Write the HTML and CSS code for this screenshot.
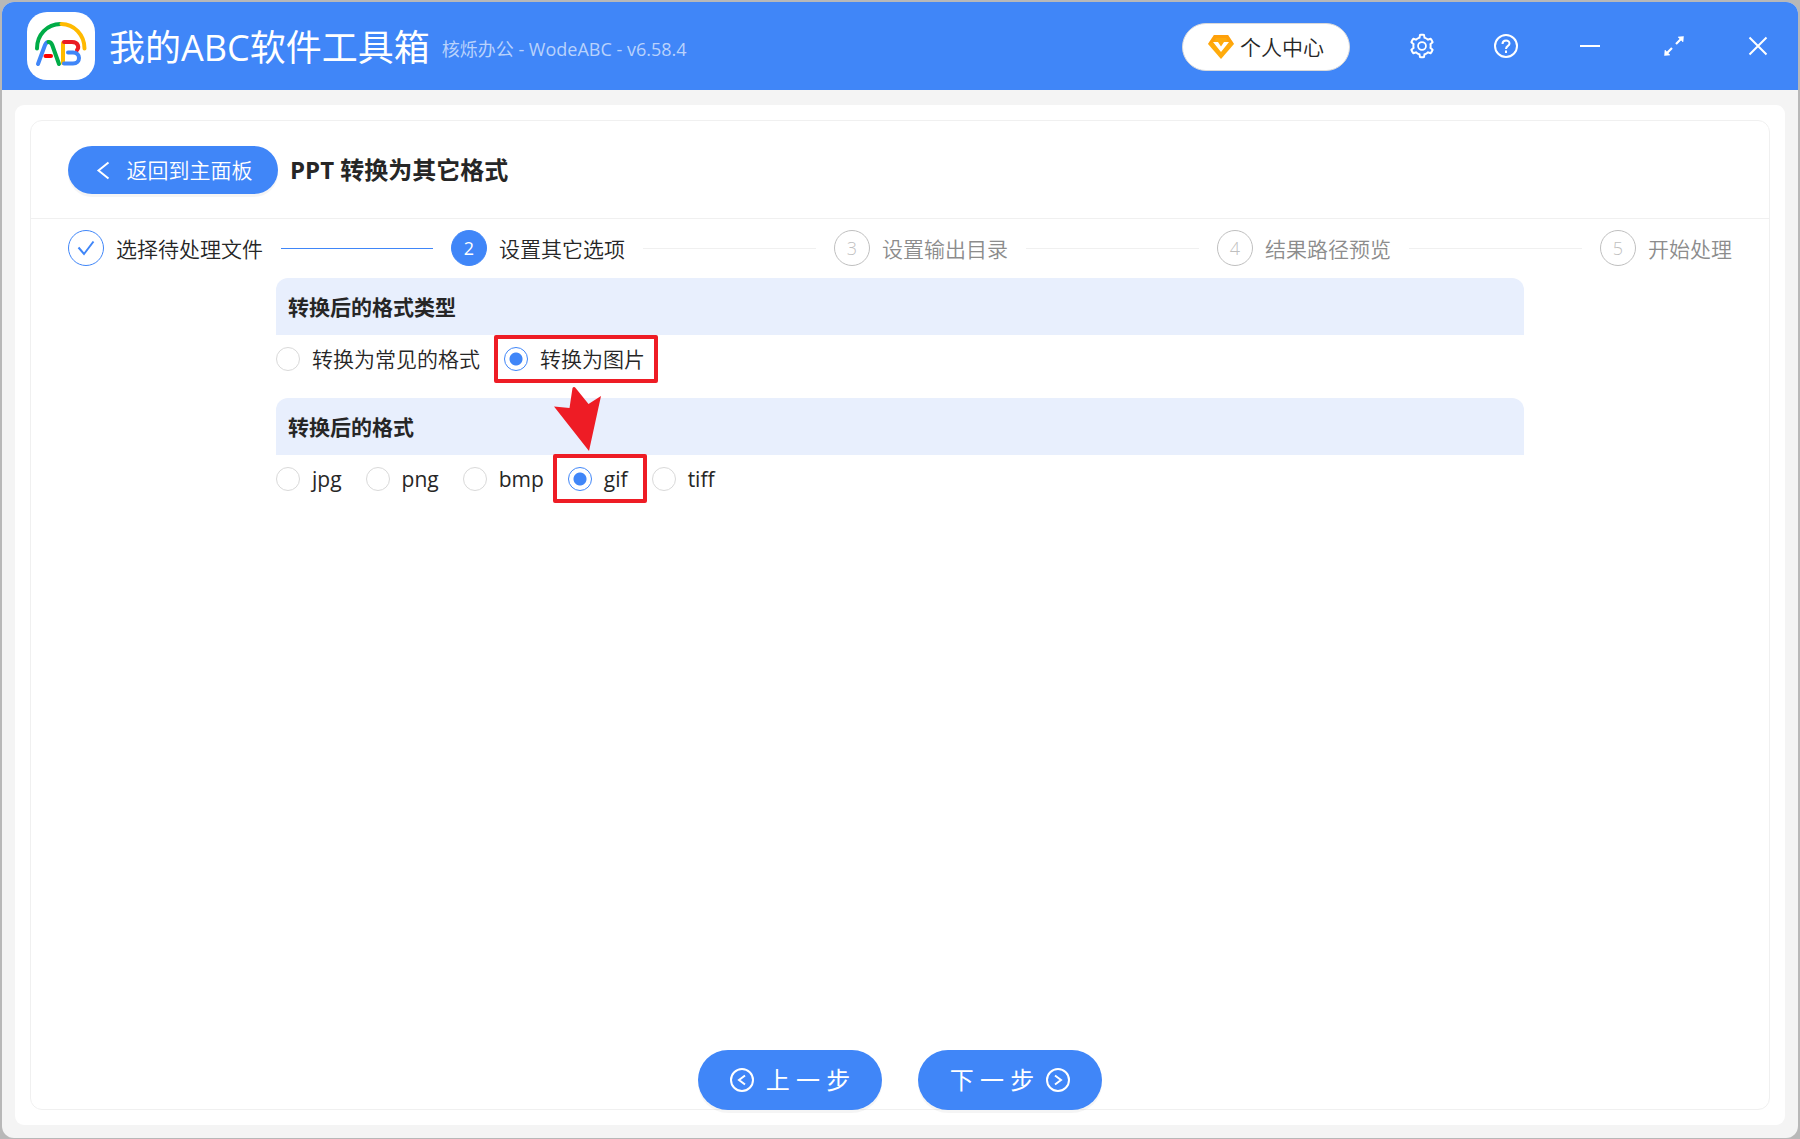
FILE: index.html
```html
<!DOCTYPE html>
<html lang="zh-CN">
<head>
<meta charset="utf-8">
<meta name="viewport" content="width=device-width, initial-scale=1">
<title>我的ABC软件工具箱</title>
<link rel="stylesheet" href="styles.css">
</head>
<body>
<div class="window">
  <header class="titlebar">
    <svg class="logo" viewBox="0 0 68 68" fill="none" stroke-width="4" stroke-linecap="round" aria-hidden="true">
      <path d="M10 36.500C10 23 20 12 33.500 12" stroke="#00ac47"/>
      <path d="M57.500 36.500C57.500 23 47 12 34.500 12" stroke="#ffba00"/>
      <path d="M11 52L18 33C18.800 31 20 30 21.500 30" stroke="#4086f8"/>
      <path d="M21.500 30C23.500 30 24.500 31 25.200 33L32 52" stroke="#00ac47"/>
      <path d="M18.500 44H24" stroke="#f00"/>
      <path d="M36 31V51" stroke="#ffba00"/>
      <path d="M37 30H45C52 30 52 36 50 38" stroke="#ea1c24"/>
      <path d="M41 40.500H46C54 40.500 54 51.500 46 51.500H37" stroke="#4086f8"/>
    </svg>
    <h1 class="app-name">我的ABC软件工具箱</h1>
    <span class="app-version">核烁办公 - WodeABC - v6.58.4</span>
    <div class="actions">
      <button class="account" type="button">
        <svg class="gem" viewBox="0 0 26 24" aria-hidden="true">
          <path d="M6 0H20L26 9L13 24L0 9Z" fill="#ffab0c"/>
          <path d="M6 0H20L26 9L20 7L18 3H8L6 7L0 9Z" fill="#ff9a0a" opacity=".6"/>
          <path d="M5 7H10L13 11.500L16 7H21L13 17Z" fill="#fff"/>
        </svg>
        个人中心
      </button>
      <button class="tool" type="button" aria-label="设置">
        <svg viewBox="0 0 1024 1024" fill="currentColor"><path fill-rule="evenodd" d="M924.8 625.7l-65.500-56c3.100-19 4.700-38.400 4.700-57.800s-1.600-38.800-4.700-57.800l65.500-56a32.030 32.030 0 0 0 9.300-35.200l-.9-2.600a442.500 442.500 0 0 0-79.700-137.900l-1.800-2.100a32.120 32.120 0 0 0-35.100-9.500l-81.300 28.900c-30-24.600-63.500-44-99.700-57.600l-15.700-85a32.050 32.050 0 0 0-25.800-25.700l-2.700-.5c-52.100-9.400-106.900-9.400-159 0l-2.700.5a32.050 32.050 0 0 0-25.800 25.700l-15.800 85.400a351.860 351.860 0 0 0-99 57.400l-81.900-29.100a32 32 0 0 0-35.100 9.500l-1.800 2.100a446.020 446.020 0 0 0-79.700 137.900l-.9 2.600c-4.500 12.500-.8 26.500 9.300 35.200l66.300 56.600c-3.100 18.800-4.600 38-4.600 57.100 0 19.200 1.500 38.400 4.600 57.100L99 625.500a32.030 32.030 0 0 0-9.300 35.200l.9 2.600c18.100 50.400 44.900 96.900 79.700 137.900l1.800 2.100a32.120 32.120 0 0 0 35.100 9.500l81.900-29.100c29.800 24.500 63.100 43.900 99 57.400l15.800 85.400a32.050 32.050 0 0 0 25.800 25.700l2.700.5a449.400 449.400 0 0 0 159 0l2.700-.5a32.050 32.050 0 0 0 25.800-25.700l15.700-85a350 350 0 0 0 99.700-57.600l81.300 28.900a32 32 0 0 0 35.100-9.500l1.800-2.100c34.800-41.100 61.600-87.500 79.700-137.900l.9-2.600c4.500-12.300.8-26.300-9.300-35zM788.300 465.900c2.500 15.100 3.800 30.600 3.800 46.100s-1.300 31-3.800 46.100l-6.600 40.100 74.700 63.900a370.030 370.030 0 0 1-42.600 73.600L721 702.800l-31.400 25.800c-23.900 19.600-50.500 35-79.300 45.800l-38.100 14.300-17.900 97a377.500 377.500 0 0 1-85 0l-17.900-97.200-37.800-14.500c-28.500-10.800-55-26.200-78.700-45.700l-31.400-25.900-93.400 33.200c-17-22.900-31.200-47.600-42.600-73.600l75.500-64.500-6.500-40c-2.400-14.900-3.700-30.300-3.700-45.500 0-15.300 1.200-30.600 3.700-45.500l6.500-40-75.500-64.500c11.300-26.100 25.600-50.700 42.600-73.600l93.400 33.200 31.400-25.900c23.700-19.500 50.200-34.900 78.700-45.700l37.900-14.300 17.900-97.200c28.100-3.200 56.800-3.200 85 0l17.900 97 38.100 14.300c28.700 10.800 55.400 26.200 79.300 45.800l31.400 25.800 92.800-32.900c17 22.900 31.200 47.600 42.600 73.600L781.800 426l6.500 39.900z"/><circle cx="512" cy="512" r="144" fill="none" stroke="currentColor" stroke-width="64"/></svg>
      </button>
      <button class="tool" type="button" aria-label="帮助">
        <svg viewBox="0 0 28 28" fill="none" stroke="currentColor" stroke-width="2"><circle cx="14" cy="14" r="11"/><path d="M10.500 12C10.500 7.500 17.500 7.500 17.500 11.500C17.500 14 14 13.800 14 17"/><path d="M14 18.500V21"/></svg>
      </button>
      <button class="tool" type="button" aria-label="最小化">
        <svg viewBox="0 0 28 28" fill="none" stroke="currentColor" stroke-width="2"><path d="M4 14H24"/></svg>
      </button>
      <button class="tool" type="button" aria-label="最大化">
        <svg viewBox="0 0 28 28" fill="currentColor" stroke="currentColor"><path d="M16 12L21 7M12 16L7 21" stroke-width="2.200"/><path d="M18 5L23.500 4.500L23 10ZM10 23L4.500 23.500L5 18Z" stroke-width=".5"/></svg>
      </button>
      <button class="tool" type="button" aria-label="关闭">
        <svg viewBox="0 0 28 28" fill="none" stroke="currentColor" stroke-width="2"><path d="M5.500 5.500L22.500 22.500M22.500 5.500L5.500 22.500"/></svg>
      </button>
    </div>
  </header>

  <main class="panel">
    <div class="card">
      <div class="card-head">
        <button class="back" type="button">
          <svg class="chevron" viewBox="0 0 21 21" fill="none" stroke="currentColor" stroke-width="2" aria-hidden="true"><path d="M14.500 2.500L4.500 10.500L14.500 18.500"/></svg>
          返回到主面板
        </button>
        <h2 class="page-title">PPT 转换为其它格式</h2>
      </div>

      <ol class="steps">
        <li class="step done">
          <span class="mark"><svg class="check" viewBox="0 0 18 18" fill="none" stroke="currentColor" stroke-width="2" aria-label="完成"><path d="M1.500 8.500L7 15L16.500 2.500"/></svg></span>
          <span class="step-name">选择待处理文件</span>
        </li>
        <li class="step current" aria-current="step"><span class="mark">2</span><span class="step-name">设置其它选项</span></li>
        <li class="step"><span class="mark">3</span><span class="step-name">设置输出目录</span></li>
        <li class="step"><span class="mark">4</span><span class="step-name">结果路径预览</span></li>
        <li class="step"><span class="mark">5</span><span class="step-name">开始处理</span></li>
      </ol>

      <form class="options">
        <h3 class="band" id="kind-title">转换后的格式类型</h3>
        <div class="choices" role="radiogroup" aria-labelledby="kind-title">
          <label class="choice"><input type="radio" name="kind" value="common">转换为常见的格式</label>
          <label class="choice"><input type="radio" name="kind" value="image" checked>转换为图片
            <span class="callout callout-kind"></span>
            <svg class="arrow" viewBox="0 0 47 64" aria-hidden="true"><path d="M18.500 1Q20 -1 22 1.500L34.500 17L47 9L35 64L0 19.500L15.500 21Z" fill="#ee1c25"/></svg>
          </label>
        </div>
        <h3 class="band" id="format-title">转换后的格式</h3>
        <div class="choices" role="radiogroup" aria-labelledby="format-title">
          <label class="choice"><input type="radio" name="format" value="jpg">jpg</label>
          <label class="choice"><input type="radio" name="format" value="png">png</label>
          <label class="choice"><input type="radio" name="format" value="bmp">bmp</label>
          <label class="choice"><input type="radio" name="format" value="gif" checked>gif<span class="callout callout-format"></span></label>
          <label class="choice"><input type="radio" name="format" value="tiff">tiff</label>
        </div>
      </form>

      <div class="pager">
        <button class="page-btn" type="button">
          <svg viewBox="0 0 24 24" fill="none" stroke="currentColor" stroke-width="2" aria-hidden="true"><circle cx="12" cy="12" r="11"/><path d="M15 7.500L9 12L15 16.500"/></svg>
          上 一 步
        </button>
        <button class="page-btn" type="button">
          下 一 步
          <svg viewBox="0 0 24 24" fill="none" stroke="currentColor" stroke-width="2" aria-hidden="true"><circle cx="12" cy="12" r="11"/><path d="M9 7.500L15 12L9 16.500"/></svg>
        </button>
      </div>
    </div>
  </main>
</div>
</body>
</html>
```
FILE: styles.css
```css
:root {
  --blue: #4086f8;
  --line: #f0f0f0;
  --ink: #262626;
  --red: #ee1c25;
  --font-light: "Open Sans", "Noto Sans CJK SC DemiLight", "Noto Sans CJK SC Light", "Noto Sans CJK SC", sans-serif;
  --font-regular: "Open Sans", "Noto Sans CJK SC", sans-serif;
}

* { box-sizing: border-box; }

body {
  margin: 0;
  min-height: 100vh;
  padding: 2px 2px 1px;
  display: flex;
  background: #b8b8b8;
  color: var(--ink);
  font-family: var(--font-light);
  font-size: 21px;
  font-weight: 300;
  line-height: 32px;
}

h1, h2, h3, ol { margin: 0; padding: 0; }

button {
  border: 0;
  padding: 0;
  font: inherit;
  color: inherit;
  background: none;
  cursor: pointer;
  white-space: nowrap;
}

svg { display: block; flex: none; }

.window {
  flex: 1;
  min-width: 0;
  display: flex;
  flex-direction: column;
  overflow: hidden;
  border-radius: 12px;
  background: #f4f4f4;
}

/* Title bar */
.titlebar {
  flex: none;
  display: flex;
  align-items: center;
  height: 88px;
  padding: 0 10px 0 25px;
  background: var(--blue);
  color: #fff;
}

.logo {
  width: 68px;
  height: 68px;
  border-radius: 20px;
  background: #fff;
}

.app-name {
  margin-left: 14px;
  padding-top: 4px;
  font-family: var(--font-regular);
  font-size: 36px;
  font-weight: 400;
  line-height: 48px;
  white-space: nowrap;
}

.app-version {
  padding-top: 6px;
  margin-left: 12px;
  font-family: var(--font-regular);
  font-size: 18px;
  font-weight: 400;
  line-height: 24px;
  white-space: nowrap;
  color: #b9d2fc;
}

.actions {
  display: flex;
  align-items: center;
  gap: 24px;
  margin-left: auto;
}

.account {
  display: flex;
  align-items: center;
  justify-content: center;
  gap: 6px;
  width: 168px;
  height: 48px;
  margin: 2px 18px 0 0;
  border: 1px solid #d9d9d9;
  border-radius: 24px;
  background: #fff;
  color: var(--ink);
}

.gem { width: 26px; height: 24px; }

.tool {
  display: grid;
  place-items: center;
  width: 60px;
  height: 60px;
}

.tool svg { width: 28px; height: 28px; }

/* Panel and card */
.panel {
  flex: 1;
  display: flex;
  margin: 15px 13px 13px;
  padding: 15px;
  border-radius: 9px;
  background: #fff;
}

.card {
  flex: 1;
  min-width: 0;
  display: flex;
  flex-direction: column;
  border: 1px solid var(--line);
  border-radius: 12px;
}

.card-head {
  display: flex;
  align-items: center;
  gap: 12px;
  padding: 25px 37px 24px;
  border-bottom: 1px solid var(--line);
}

.back {
  display: flex;
  align-items: center;
  justify-content: center;
  gap: 12px;
  width: 210px;
  height: 48px;
  border-radius: 24px;
  background: var(--blue);
  color: #fff;
  box-shadow: 0 3px 0 rgba(0, 0, 0, 0.04);
}

.chevron { width: 21px; height: 21px; }

.page-title {
  font-family: var(--font-regular);
  font-size: 24px;
  font-weight: 700;
}

/* Steps */
.steps {
  display: flex;
  padding: 11px 37px 12px;
  list-style: none;
}

.step {
  flex: 1;
  display: flex;
  align-items: center;
  color: #8c8c8c;
  white-space: nowrap;
}

.step:last-child { flex: none; }

.step-name { padding-top: 2px; }

.mark {
  flex: none;
  display: grid;
  place-items: center;
  width: 36px;
  height: 36px;
  margin-right: 12px;
  border: 1px solid #bfbfbf;
  border-radius: 50%;
  color: #bfbfbf;
  font-size: 18px;
}

.check { width: 18px; height: 18px; }

.step:not(:last-child)::after {
  content: "";
  flex: 1;
  height: 1px;
  margin: 0 18px;
  background: var(--line);
}

.done, .current { color: var(--ink); }
.done .mark { border-color: var(--blue); color: var(--blue); }
.step.done::after { background: var(--blue); }
.current .mark { border-color: var(--blue); background: var(--blue); color: #fff; font-weight: 400; }

/* Options */
.options {
  width: calc((100% - 74px) * 3 / 4);
  margin: 0 auto;
}

.band {
  padding: 13px 12px 12px;
  border-radius: 12px 12px 0 0;
  background: #e8effd;
  font-family: var(--font-regular);
  font-size: 21px;
  font-weight: 700;
}

.choices {
  display: flex;
  flex-wrap: wrap;
  gap: 24px;
  padding: 12px 0 27px;
}

.choice {
  position: relative;
  display: flex;
  align-items: center;
  gap: 12px;
  height: 24px;
  font-weight: 400;
  white-space: nowrap;
}

.choice input {
  appearance: none;
  flex: none;
  width: 24px;
  height: 24px;
  margin: 0;
  border: 1px solid #d9d9d9;
  border-radius: 50%;
  background: #fff;
}

.choice input:checked {
  border-color: var(--blue);
  background: radial-gradient(circle, var(--blue) 6px, #fff 7px);
}

.callout {
  position: absolute;
  border: 4px solid var(--red);
  border-radius: 2px;
  pointer-events: none;
}

.callout-kind { inset: -12px -13px -12px -10px; }
.callout-format { inset: -13px -19px -12px -15px; }

.arrow {
  position: absolute;
  top: 40px;
  left: 50px;
  width: 47px;
  height: 64px;
}

/* Previous / next */
.pager {
  display: flex;
  justify-content: center;
  gap: 36px;
  margin: auto 0 -1px;
}

.page-btn {
  display: flex;
  align-items: center;
  justify-content: center;
  gap: 12px;
  width: 184px;
  height: 60px;
  border-radius: 30px;
  background: var(--blue);
  color: #fff;
  font-family: var(--font-regular);
  font-size: 24px;
  font-weight: 400;
  box-shadow: 0 3px 0 rgba(0, 0, 0, 0.04);
}

.page-btn svg { width: 24px; height: 24px; }
```
